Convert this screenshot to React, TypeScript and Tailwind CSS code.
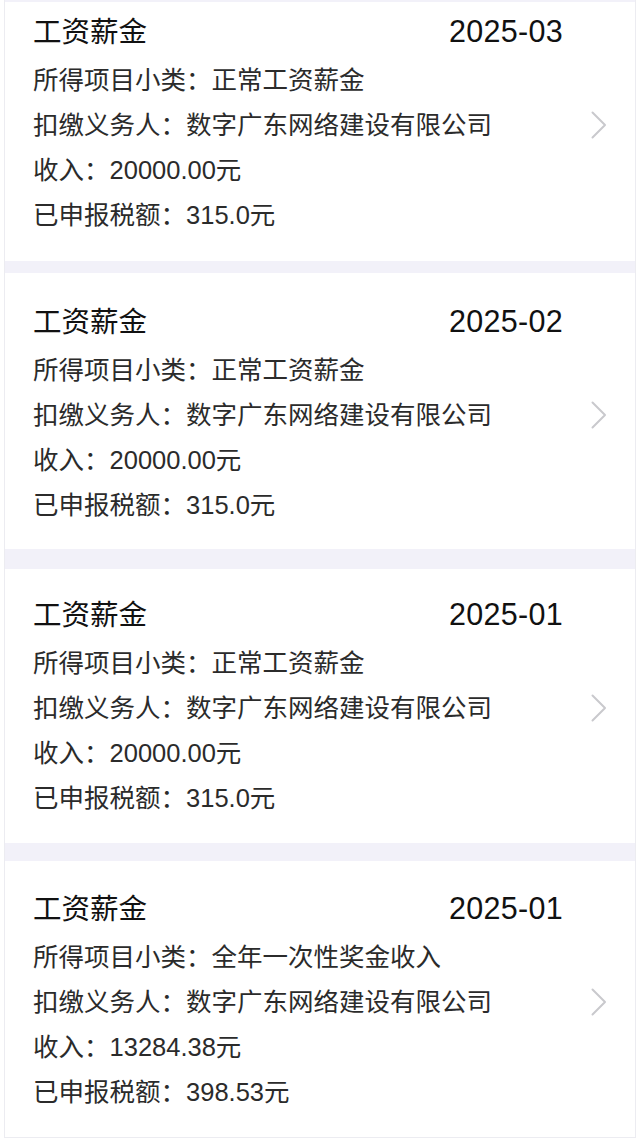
import React from "react";

type Item = {
  date: string;
  sub: string;
  income: string;
  tax: string;
  pad: string;
  gap: string;
};

const items: Item[] = [
  { date: "2025-03", sub: "正常工资薪金", income: "20000.00元", tax: "315.0元", pad: "pt-[10px] pb-[23px]", gap: "h-[12px]" },
  { date: "2025-02", sub: "正常工资薪金", income: "20000.00元", tax: "315.0元", pad: "pt-[29px] pb-[21px]", gap: "h-[20px]" },
  { date: "2025-01", sub: "正常工资薪金", income: "20000.00元", tax: "315.0元", pad: "pt-[26px] pb-[22px]", gap: "h-[18px]" },
  { date: "2025-01", sub: "全年一次性奖金收入", income: "13284.38元", tax: "398.53元", pad: "pt-[28px] pb-[22px]", gap: "h-0" },
];

const font = { fontFamily: '"Liberation Sans", "Noto Sans CJK SC", sans-serif' };

function Chevron() {
  return (
    <svg width="16" height="28" viewBox="0 0 16 28" fill="none">
      <path d="M1.5 1.5 L14 14 L1.5 26.5" stroke="#c9c9cd" strokeWidth="2" strokeLinecap="round" strokeLinejoin="round" />
    </svg>
  );
}

function Card({ it }: { it: Item }) {
  return (
    <>
      <div className={`flex items-center bg-white pl-[28px] pr-[28px] ${it.pad}`}>
        <div className="flex-1 min-w-0">
          <div className="flex items-center justify-between h-[40px] pr-[28px]">
            <span className="text-[28.5px] text-[#111111]">工资薪金</span>
            <span className="text-[30.5px] text-[#111111] tracking-[0.3px]">{it.date}</span>
          </div>
          <div className="mt-[6px] text-[25.5px] text-[#2b2b2b]">
            <div className="h-[45px] leading-[45px]">所得项目小类：{it.sub}</div>
            <div className="h-[45px] leading-[45px]">扣缴义务人：数字广东网络建设有限公司</div>
            <div className="h-[45px] leading-[45px]">收入：{it.income}</div>
            <div className="h-[45px] leading-[45px]">已申报税额：{it.tax}</div>
          </div>
        </div>
        <div className="w-[16px] flex items-center">
          <Chevron />
        </div>
      </div>
      <div className={`${it.gap} bg-[#f2f1f9]`} />
    </>
  );
}

export default function App() {
  return (
    <div className="w-[640px] min-h-[1142px] bg-white" style={font}>
      <div className="mx-[4px] border-x border-[#ececf1]">
        <div className="h-[2px] bg-[#f2f1f9]" />
        {items.map((it, i) => (
          <Card key={i} it={it} />
        ))}
        <div className="h-[1px] bg-[#ececf1]" />
      </div>
    </div>
  );
}
